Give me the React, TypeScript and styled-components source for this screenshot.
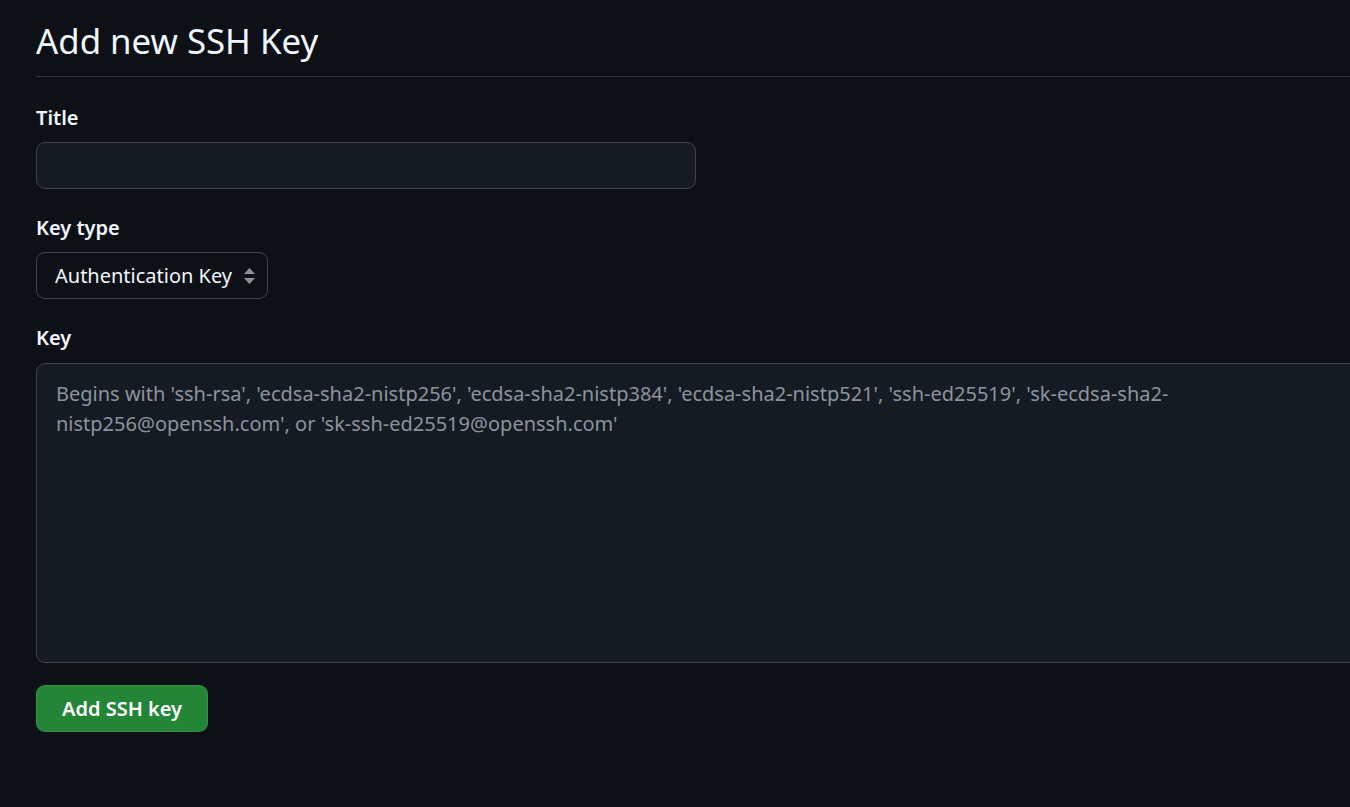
import * as React from 'react';
import styled, { createGlobalStyle } from 'styled-components';

const colors = {
	canvas: '#0d1117',
	inset: '#151b23',
	border: '#3d444d',
	divider: '#30363d',
	text: '#f0f6fc',
	muted: '#8b949e',
	green: '#238636',
};

const GlobalStyle = createGlobalStyle`
	html, body {
		margin: 0;
		padding: 0;
		background: ${colors.canvas};
		overflow: hidden;
	}
	body {
		font-family: 'Noto Sans', 'Open Sans', sans-serif;
		color: ${colors.text};
	}
`;

const Page = styled.div`
	width: 1420px;
	padding: 15px 0 0 36px;
	box-sizing: border-box;
`;

const Subhead = styled.div`
	padding-bottom: 10px;
	margin-bottom: 26px;
	border-bottom: 1px solid ${colors.divider};
`;

const Heading = styled.h2`
	margin: 0;
	font-size: 34.8px;
	font-weight: 400;
	line-height: 51px;
`;

const Form = styled.form`
	display: flex;
	flex-direction: column;
	align-items: flex-start;
`;

const Field = styled.div`
	display: flex;
	flex-direction: column;
	align-items: flex-start;
	width: 100%;
	margin-bottom: 24px;
`;

const Label = styled.label`
	display: block;
	font-size: 20px;
	font-weight: 600;
	line-height: 30px;
	margin-bottom: 9px;
`;

const TextInput = styled.input`
	box-sizing: border-box;
	width: 660px;
	height: 47px;
	padding: 0 17px;
	border: 1px solid ${colors.border};
	border-radius: 9px;
	background: ${colors.inset};
	color: ${colors.text};
	font: inherit;
	font-size: 20px;
	outline: none;
`;

const SelectWrap = styled.div`
	position: relative;
	display: inline-flex;
`;

const Select = styled.select`
	appearance: none;
	box-sizing: border-box;
	height: 47px;
	padding: 0 34px 0 18px;
	border: 1px solid ${colors.border};
	border-radius: 9px;
	background: ${colors.canvas};
	color: ${colors.text};
	font: inherit;
	font-size: 20px;
	outline: none;
`;

const Chevrons = styled.svg`
	position: absolute;
	right: 12px;
	top: 50%;
	transform: translateY(-50%);
	pointer-events: none;
`;

const TextArea = styled.textarea`
	box-sizing: border-box;
	width: 1380px;
	height: 300px;
	margin-top: 1px;
	padding: 15px 19px;
	border: 1px solid ${colors.border};
	border-radius: 9px;
	background: ${colors.inset};
	color: ${colors.text};
	font: inherit;
	font-size: 20px;
	line-height: 30px;
	resize: none;
	outline: none;

	&::placeholder {
		color: ${colors.muted};
	}
`;

const Button = styled.button`
	box-sizing: border-box;
	height: 47px;
	padding: 0 25px;
	margin-top: -2px;
	border: 1px solid rgba(240, 246, 252, 0.1);
	border-radius: 9px;
	background: ${colors.green};
	color: #ffffff;
	font: inherit;
	font-size: 20px;
	font-weight: 600;
	cursor: pointer;
`;

const placeholder =
	"Begins with 'ssh-rsa', 'ecdsa-sha2-nistp256', 'ecdsa-sha2-nistp384', 'ecdsa-sha2-nistp521', 'ssh-ed25519', 'sk-ecdsa-sha2-nistp256@openssh.com', or 'sk-ssh-ed25519@openssh.com'";

export default function App() {
	return (
		<Page>
			<GlobalStyle />
			<Subhead>
				<Heading>Add new SSH Key</Heading>
			</Subhead>
			<Form onSubmit={e => e.preventDefault()}>
				<Field>
					<Label htmlFor="ssh_key_title">Title</Label>
					<TextInput id="ssh_key_title" type="text" />
				</Field>
				<Field>
					<Label htmlFor="ssh_key_type">Key type</Label>
					<SelectWrap>
						<Select id="ssh_key_type" defaultValue="authentication">
							<option value="authentication">Authentication Key</option>
							<option value="signing">Signing Key</option>
						</Select>
						<Chevrons width="13" height="20" viewBox="0 0 13 20">
							<path d="M6.5 2 L12 8 H1 Z" fill="#8b949e" />
							<path d="M6.5 18 L12 12 H1 Z" fill="#8b949e" />
						</Chevrons>
					</SelectWrap>
				</Field>
				<Field>
					<Label htmlFor="ssh_key_key">Key</Label>
					<TextArea id="ssh_key_key" placeholder={placeholder} />
				</Field>
				<Button type="submit">Add SSH key</Button>
			</Form>
		</Page>
	);
}
